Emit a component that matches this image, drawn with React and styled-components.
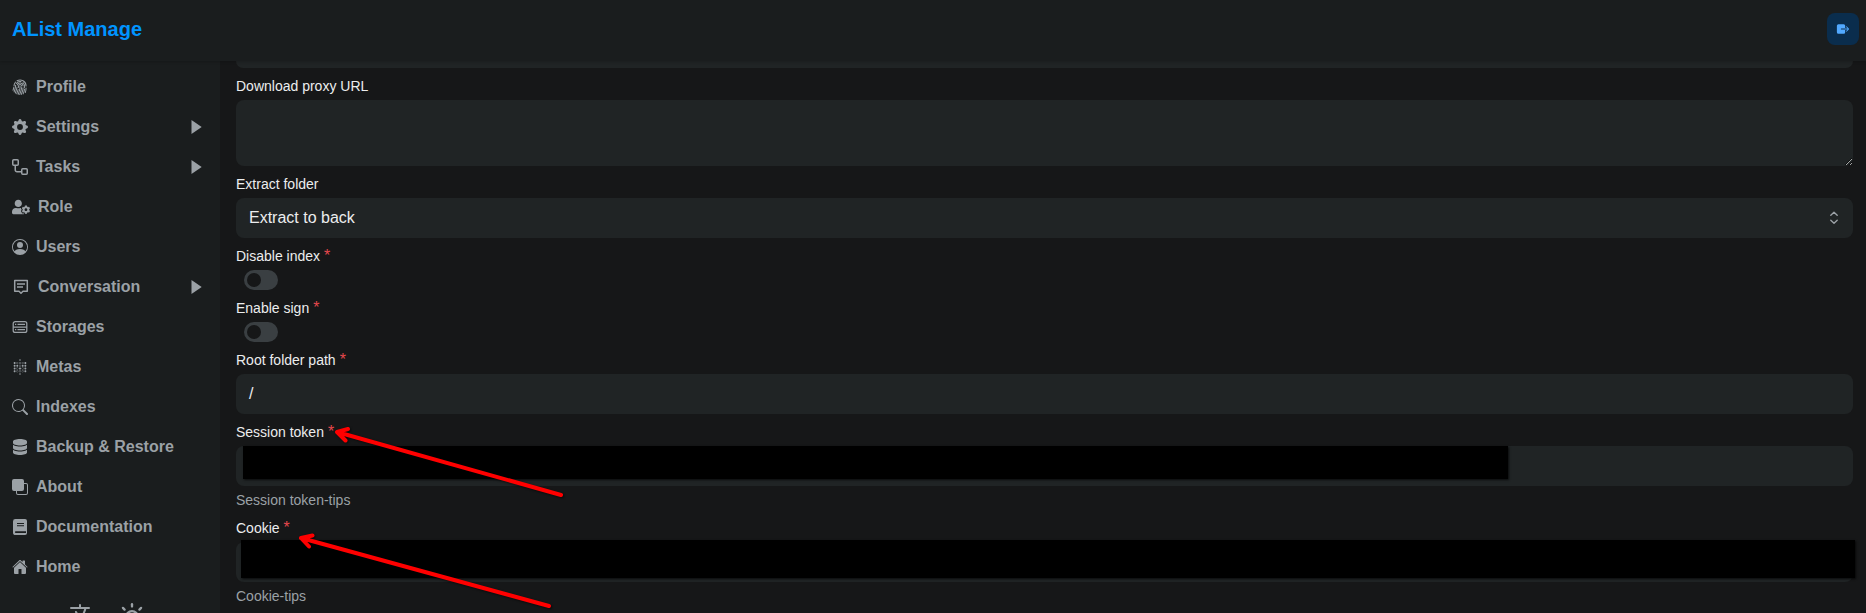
import React from "react";
import styled, { createGlobalStyle } from "styled-components";
import { BsFingerprint, BsGearFill, BsPersonCircle, BsSearch, BsFront } from "react-icons/bs";
import { FaUserCog } from "react-icons/fa";
import { FaDatabase } from "react-icons/fa6";
import { SiMetabase } from "react-icons/si";
import { IoHome, IoExit, IoLanguageOutline } from "react-icons/io5";
import { FiSun } from "react-icons/fi";

const Global = createGlobalStyle`
  * { box-sizing: border-box; }
  body {
    margin: 0;
    background: #161718;
    color: #ecedee;
    font: 16px/24px "Liberation Sans", Arial, sans-serif;
    overflow: hidden;
  }
`;

const Page = styled.div`
  display: flex;
  flex-direction: column;
  height: 100vh;
  overflow: hidden;
`;

const Header = styled.header`
  position: relative;
  z-index: 2;
  flex: none;
  height: 61px;
  padding: 0 7px 3px 12px;
  display: flex;
  align-items: center;
  justify-content: space-between;
  background: #1a1d1e;
  box-shadow: 0 1px 3px rgba(0, 0, 0, 0.2);
`;

const Brand = styled.h1`
  margin: 0;
  font-size: 20px;
  line-height: 24px;
  font-weight: 700;
  color: #0094ff;
`;

const LogoutButton = styled.button`
  width: 32px;
  height: 32px;
  padding: 0;
  border: 0;
  border-radius: 8px;
  display: grid;
  place-items: center;
  background: #0a2d4d;
  color: #52a9ff;
`;

const Body = styled.div`
  flex: 1;
  min-height: 0;
  display: flex;
`;

const Sidebar = styled.nav`
  flex: none;
  width: 220px;
  padding: 6px 18px 0 12px;
  background: #1a1d1e;
  overflow: hidden;
`;

const MenuItem = styled.a`
  height: 40px;
  display: flex;
  align-items: center;
  gap: 8px;
  color: #9ba1a6;
  font-weight: 700;
  svg { flex: none; }
`;

const MenuLabel = styled.span`
  flex: 1;
  padding-bottom: 1px;
`;

const SideTools = styled.div`
  display: flex;
  align-items: center;
  gap: 18px;
  padding: 14px 0 0 56px;
  color: #9ba1a6;
  svg { flex: none; }
`;

const Main = styled.main`
  flex: 1;
  min-width: 0;
  padding: 0 13px 0 16px;
  display: flex;
  flex-direction: column;
  overflow: hidden;
`;

const Label = styled.label`
  flex: none;
  display: block;
  height: 32px;
  padding-top: 8px;
  font-size: 14px;
  line-height: 21px;
`;

const Required = styled.span`
  margin-left: 4px;
  color: #e5484d;
  font-size: 16px;
  line-height: 1;
`;

const Box = styled.div`
  flex: none;
  position: relative;
  height: 40px;
  border-radius: 8px;
  padding: 0 11px 0 13px;
  display: flex;
  align-items: center;
  justify-content: space-between;
  background: #202425;
`;

const PreviousField = styled(Box)`
  height: 7px;
  border-radius: 0 0 8px 8px;
`;

const Area = styled.textarea`
  flex: none;
  display: block;
  width: 100%;
  height: 66px;
  border: 0;
  border-radius: 8px;
  background: #202425;
  resize: vertical;
  color-scheme: dark;
`;

const Switch = styled.span`
  flex: none;
  width: 34px;
  height: 20px;
  margin-left: 8px;
  padding: 3px;
  border-radius: 10px;
  background: #3a3f42;
  &::before {
    content: "";
    display: block;
    width: 14px;
    height: 14px;
    border-radius: 50%;
    background: #161718;
  }
`;

const Tip = styled.div`
  flex: none;
  height: 24px;
  padding-top: 4px;
  font-size: 14px;
  line-height: 21px;
  color: #9ba1a6;
`;

const Redaction = styled.span`
  position: absolute;
  left: ${(p) => p.$left}px;
  right: ${(p) => p.$right}px;
  top: ${(p) => p.$top}px;
  height: ${(p) => p.$height}px;
  background: #000;
  box-shadow: 1px 1px 2px rgba(0, 0, 0, 0.7);
`;

const Arrows = styled.svg`
  position: absolute;
  left: 290px;
  top: 420px;
  z-index: 3;
  filter: drop-shadow(1px 1px 1px rgba(0, 0, 0, 0.6));
`;

const WorkflowIcon = () => (
  <svg width="16" height="16" viewBox="0 0 16 16" fill="none" stroke="currentColor" strokeWidth="1.5">
    <rect x=".75" y=".75" width="5.5" height="5.5" rx="1" />
    <rect x="9.75" y="9.75" width="5.5" height="5.5" rx="1" />
    <path d="M3.25 6.5V11A1.75 1.75 0 0 0 5 12.75h4.5" />
  </svg>
);

const CommentIcon = () => (
  <svg width="18" height="18" viewBox="0 0 18 18" fill="none" stroke="currentColor" strokeWidth="1.5" strokeLinejoin="round">
    <path d="M2.7 2.5h12.6v10.7h-4.3l-2 2-2-2H2.7zM5 5.9h8M5 9h6" />
  </svg>
);

const RackIcon = () => (
  <svg width="16" height="16" viewBox="0 0 16 16" fill="none" stroke="currentColor" strokeWidth="1.25">
    <rect x="1.2" y="2.6" width="13.6" height="10.8" rx="2" />
    <path d="M1.2 8h13.6M3 5.3h1.3M5.5 5.3H13M3 10.7h1.3M5.5 10.7H13" />
  </svg>
);

const BookIcon = () => (
  <svg width="16" height="16" viewBox="0 0 16 16" fill="currentColor" fillRule="evenodd">
    <path d="M3.4 0h9.6a2 2 0 0 1 2 2v12a2 2 0 0 1-2 2H3.6A2.6 2.6 0 0 1 1 13.4v-11A2.4 2.4 0 0 1 3.400 0zM5 4v1h7V4zM5 6.200v1h7v-1zM3.800 12.200a.9.9 0 0 0 0 1.800H14v-1.800z" />
  </svg>
);

const Caret = () => (
  <svg width="11" height="15" viewBox="0 0 11 15" fill="currentColor">
    <path d="M.5 0 10.7 7 .5 14z" />
  </svg>
);

const SelectorIcon = () => (
  <svg width="16" height="16" viewBox="0 0 16 16" fill="none" stroke="#9ba1a6" strokeWidth="1.4" strokeLinecap="round" strokeLinejoin="round">
    <path d="m4.800 5.200 3.200-3 3.200 3M4.800 10.300l3.200 3 3.200-3" />
  </svg>
);

const items = [
  ["Profile", <BsFingerprint />],
  ["Settings", <BsGearFill />, true],
  ["Tasks", <WorkflowIcon />, true],
  ["Role", <FaUserCog size={18} />],
  ["Users", <BsPersonCircle />],
  ["Conversation", <CommentIcon />, true],
  ["Storages", <RackIcon />],
  ["Metas", <SiMetabase />],
  ["Indexes", <BsSearch />],
  ["Backup & Restore", <FaDatabase />],
  ["About", <BsFront />],
  ["Documentation", <BookIcon />],
  ["Home", <IoHome />],
];

const FieldLabel = ({ children, required }) => (
  <Label>
    {children}
    {required && <Required>*</Required>}
  </Label>
);

export default function App() {
  return (
    <Page>
      <Global />
      <Header>
        <Brand>AList Manage</Brand>
        <LogoutButton aria-label="Logout"><IoExit size={14} /></LogoutButton>
      </Header>
      <Body>
        <Sidebar>
          {items.map(([name, icon, nested]) => (
            <MenuItem key={name}>
              {icon}
              <MenuLabel>{name}</MenuLabel>
              {nested && <Caret />}
            </MenuItem>
          ))}
          <SideTools>
            <IoLanguageOutline size={32} />
            <FiSun size={28} />
          </SideTools>
        </Sidebar>
        <Main>
          <PreviousField />
          <FieldLabel>Download proxy URL</FieldLabel>
          <Area />
          <FieldLabel>Extract folder</FieldLabel>
          <Box>
            Extract to back
            <SelectorIcon />
          </Box>
          <FieldLabel required>Disable index</FieldLabel>
          <Switch />
          <FieldLabel required>Enable sign</FieldLabel>
          <Switch />
          <FieldLabel required>Root folder path</FieldLabel>
          <Box>/</Box>
          <FieldLabel required>Session token</FieldLabel>
          <Box><Redaction $left={7} $right={345} $top={0} $height={33} /></Box>
          <Tip>Session token-tips</Tip>
          <FieldLabel required>Cookie</FieldLabel>
          <Box><Redaction $left={5} $right={-2} $top={-2} $height={38} /></Box>
          <Tip>Cookie-tips</Tip>
        </Main>
      </Body>
      <Arrows width="290" height="193" viewBox="290 420 290 193" fill="none" stroke="#f00" strokeWidth="4" strokeLinecap="round" strokeLinejoin="round">
        <path d="M561 495 337 432M348 429 337 432 345.5 440.5" />
        <path d="M549 606 301 538M312.5 535.5 301 538 309 546.5" />
      </Arrows>
    </Page>
  );
}
